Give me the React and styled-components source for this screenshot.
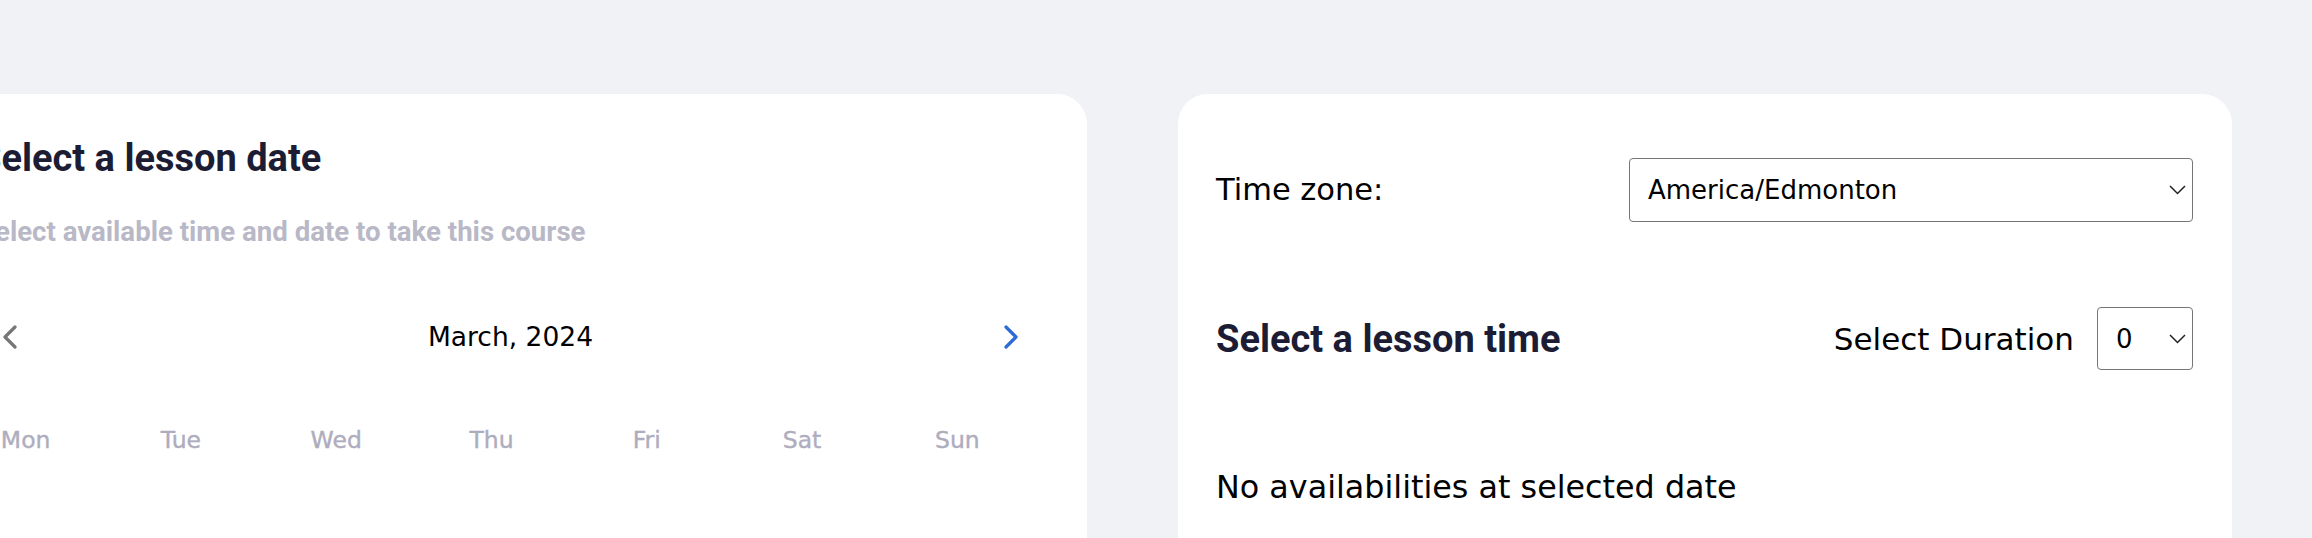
import React from 'react';
import styled, { createGlobalStyle } from 'styled-components';

const GlobalStyle = createGlobalStyle`
  html, body {
    margin: 0;
    background: #f1f2f6;
  }
  body {
    font-family: "DejaVu Sans", "Open Sans", sans-serif;
    color: #000;
    overflow: hidden;
  }
`;

const Layout = styled.main`
  display: grid;
  grid-template-columns: 1197px 1054px;
  column-gap: 91px;
  align-items: start;
  margin-left: -110px;
  padding-top: 94px;
`;

const Card = styled.section`
  box-sizing: border-box;
  background: #fff;
  border-radius: 30px;
  min-height: 560px;
  padding: ${props => props.$padding};
`;

const Title = styled.h2`
  margin: 0;
  font-family: Roboto, "Liberation Sans", sans-serif;
  font-weight: 700;
  font-size: 38px;
  line-height: 46px;
  color: #1c1d35;
  padding-left: ${props => props.$indent || 0};
`;

const Subtitle = styled.p`
  margin: 35px 0 0;
  padding-left: 30px;
  font-family: Roboto, "Liberation Sans", sans-serif;
  font-weight: 700;
  font-size: 27.6px;
  line-height: 32px;
  color: #b9b8c6;
`;

const MonthBar = styled.div`
  display: flex;
  align-items: center;
  justify-content: space-between;
  height: 40px;
  margin-top: 69px;
  padding: 0 16px 0 54px;
`;

const NavButton = styled.button`
  display: flex;
  align-items: center;
  justify-content: center;
  padding: 0;
  border: 0;
  background: none;
  cursor: pointer;
  color: ${props => (props.$active ? '#2c6bd6' : '#777777')};
  svg {
    display: block;
  }
`;

const MonthLabel = styled.span`
  font-size: 26.5px;
  line-height: 40px;
  color: #000;
`;

const WeekGrid = styled.div`
  display: grid;
  grid-template-columns: repeat(7, 1fr);
  margin-top: 69px;
`;

const DayName = styled.span`
  text-align: center;
  font-size: 23.5px;
  line-height: 28px;
  color: #aeadbe;
  -webkit-text-stroke: 0.4px #aeadbe;
`;

const FieldRow = styled.div`
  display: grid;
  grid-template-columns: 1fr 564px;
  align-items: center;
`;

const FieldLabel = styled.label`
  font-size: 30.5px;
  line-height: 38px;
`;

const SelectWrap = styled.div`
  position: relative;
  width: ${props => props.$width};
`;

const Select = styled.select`
  appearance: none;
  box-sizing: border-box;
  display: block;
  width: 100%;
  height: ${props => props.$height};
  margin: 0;
  padding: 0 30px 0 18px;
  border: 1px solid #767676;
  border-radius: 4px;
  background: #fff;
  font-family: "DejaVu Sans", sans-serif;
  font-size: 26px;
  color: #000;
`;

const Caret = styled.svg`
  position: absolute;
  right: 7px;
  top: 50%;
  transform: translateY(-50%);
  pointer-events: none;
`;

const LessonRow = styled.div`
  display: flex;
  align-items: center;
  justify-content: space-between;
  margin-top: 85px;
`;

const DurationGroup = styled.div`
  display: flex;
  align-items: center;
  gap: 23px;
`;

const DurationLabel = styled.span`
  font-size: 31px;
  line-height: 38px;
`;

const EmptyNote = styled.p`
  margin: 98px 0 0;
  font-size: 31.8px;
  line-height: 38px;
`;

const days = ['Mon', 'Tue', 'Wed', 'Thu', 'Fri', 'Sat', 'Sun'];

function Chevron({ dir }) {
  const points = dir === 'left' ? '13,2 3,12 13,22' : '3,2 13,12 3,22';
  return (
    <svg width="16" height="24" viewBox="0 0 16 24">
      <polyline
        points={points}
        fill="none"
        stroke="currentColor"
        strokeWidth="3.2"
        strokeLinecap="round"
        strokeLinejoin="round"
      />
    </svg>
  );
}

function Dropdown({ width, height, value, options }) {
  return (
    <SelectWrap $width={width}>
      <Select $height={height} defaultValue={value}>
        {options.map(o => (
          <option key={o}>{o}</option>
        ))}
      </Select>
      <Caret width="17" height="10" viewBox="0 0 17 10">
        <polyline
          points="1,1 8.5,8.5 16,1"
          fill="none"
          stroke="#222"
          strokeWidth="1.5"
        />
      </Caret>
    </SelectWrap>
  );
}

export default function App() {
  return (
    <>
      <GlobalStyle />
      <Layout>
        <Card $padding="41px 52px 40px 58px">
          <Title $indent="30px">Select a lesson date</Title>
          <Subtitle>Select available time and date to take this course</Subtitle>
          <MonthBar>
            <NavButton aria-label="Previous month">
              <Chevron dir="left" />
            </NavButton>
            <MonthLabel>March, 2024</MonthLabel>
            <NavButton $active aria-label="Next month">
              <Chevron dir="right" />
            </NavButton>
          </MonthBar>
          <WeekGrid>
            {days.map(d => (
              <DayName key={d}>{d}</DayName>
            ))}
          </WeekGrid>
        </Card>

        <Card $padding="64px 39px 40px 38px">
          <FieldRow>
            <FieldLabel>Time zone:</FieldLabel>
            <Dropdown
              width="564px"
              height="64px"
              value="America/Edmonton"
              options={['America/Edmonton', 'America/Toronto', 'America/Vancouver']}
            />
          </FieldRow>
          <LessonRow>
            <Title>Select a lesson time</Title>
            <DurationGroup>
              <DurationLabel>Select Duration</DurationLabel>
              <Dropdown width="96px" height="63px" value="0" options={['0', '30', '60']} />
            </DurationGroup>
          </LessonRow>
          <EmptyNote>No availabilities at selected date</EmptyNote>
        </Card>
      </Layout>
    </>
  );
}
